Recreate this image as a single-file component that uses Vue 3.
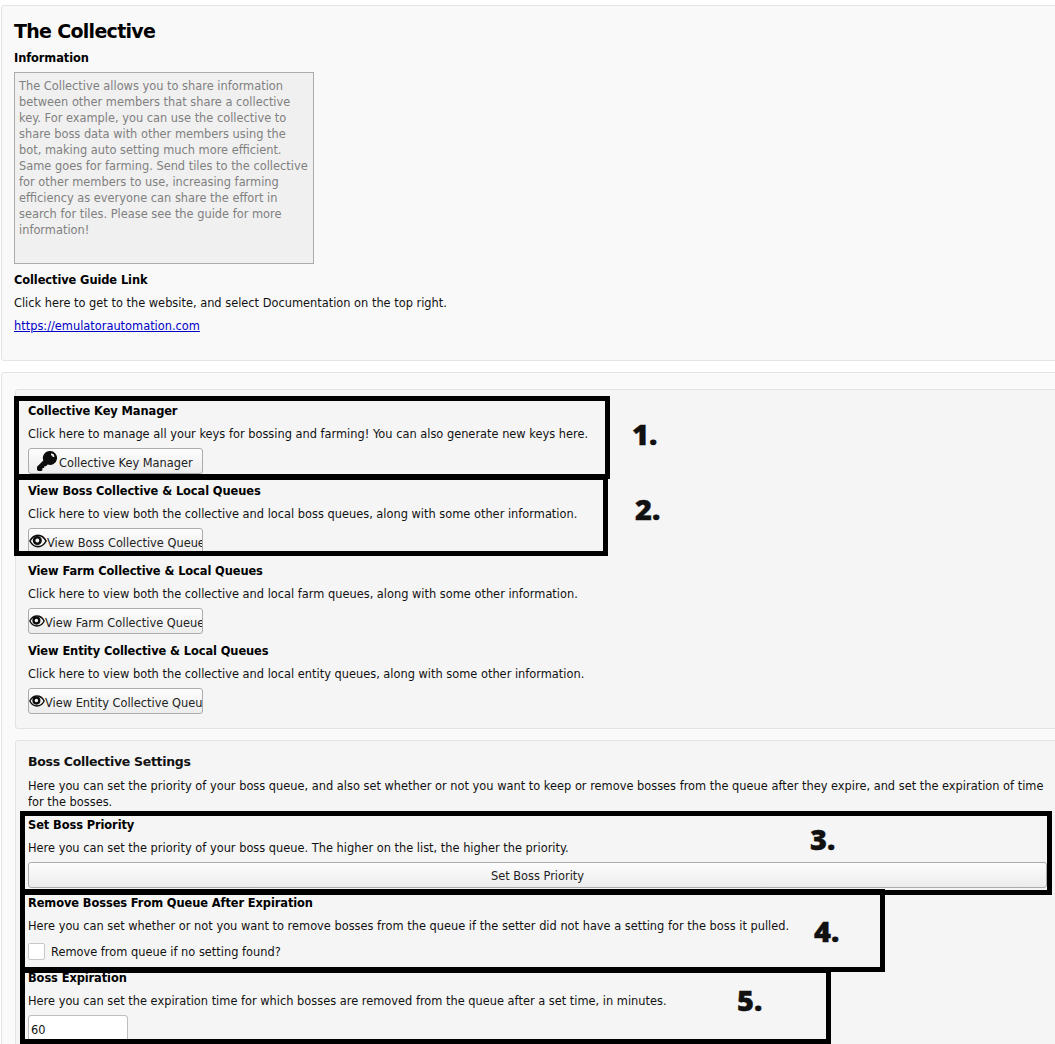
<script setup>
const eyeSections = [
  { title: 'View Boss Collective & Local Queues', text: 'Click here to view both the collective and local boss queues, along with some other information.', btn: 'View Boss Collective Queue', big: true },
  { title: 'View Farm Collective & Local Queues', text: 'Click here to view both the collective and local farm queues, along with some other information.', btn: 'View Farm Collective Queue', big: false },
  { title: 'View Entity Collective & Local Queues', text: 'Click here to view both the collective and local entity queues, along with some other information.', btn: 'View Entity Collective Queue', big: false },
]
</script>

<template>
  <div class="page">
    <section class="card top">
      <h1>The Collective</h1>
      <h3 class="info">Information</h3>
      <div class="area">The Collective allows you to share information between other members that share a collective key. For example, you can use the collective to share boss data with other members using the bot, making auto setting much more efficient. Same goes for farming. Send tiles to the collective for other members to use, increasing farming efficiency as everyone can share the effort in search for tiles. Please see the guide for more information!</div>
      <h3 class="guide">Collective Guide Link</h3>
      <p>Click here to get to the website, and select Documentation on the top right.</p>
      <a href="#" class="link">https://emulatorautomation.com</a>
    </section>

    <section class="card outer">
      <div class="inner first">
        <div class="row">
          <h3>Collective Key Manager</h3>
          <p>Click here to manage all your keys for bossing and farming! You can also generate new keys here.</p>
          <button class="btn keybtn">
            <svg class="icon" viewBox="0 0 20 20" width="20" height="20"><path d="M13 0a7 7 0 1 1-2.300 13.600L9 15.300H7.200v1.800H5.400V19l-1 1H1.200L0 18.800v-3L6.300 9.500A7 7 0 0 1 13 0z" fill="#0c0c0c"/><path d="M14 2.500a3.400 3.400 0 0 1 3.400 3.400h-1.700A1.700 1.700 0 0 0 14 4.200z" fill="#f3f3f3"/></svg>
            <span class="label">Collective Key Manager</span>
          </button>
        </div>
        <div class="row" v-for="s in eyeSections" :key="s.title">
          <h3>{{ s.title }}</h3>
          <p>{{ s.text }}</p>
          <button class="btn eyebtn">
            <svg class="icon" viewBox="0 0 16 16" :width="s.big ? 18 : 16" :height="s.big ? 18 : 16"><path d="M.8 8C2.600 4.600 5 3 8 3s5.400 1.600 7.200 5c-1.800 3.400-4.200 5-7.200 5S2.600 11.400.8 8z" fill="none" stroke="#0c0c0c" stroke-width="1.400"/><circle cx="7.400" cy="7.600" r="2.900" fill="none" stroke="#0c0c0c" stroke-width="2.300"/></svg>
            <span class="label">{{ s.btn }}</span>
          </button>
        </div>
      </div>

      <div class="inner second">
        <h2>Boss Collective Settings</h2>
        <p class="intro">Here you can set the priority of your boss queue, and also set whether or not you want to keep or remove bosses from the queue after they expire, and set the expiration of time for the bosses.</p>
        <div class="row priority">
          <h3>Set Boss Priority</h3>
          <p>Here you can set the priority of your boss queue. The higher on the list, the higher the priority.</p>
          <button class="btn wide"><span class="label">Set Boss Priority</span></button>
        </div>
        <div class="row remove">
          <h3>Remove Bosses From Queue After Expiration</h3>
          <p>Here you can set whether or not you want to remove bosses from the queue if the setter did not have a setting for the boss it pulled.</p>
          <label class="check"><span class="box"></span>Remove from queue if no setting found?</label>
        </div>
        <div class="row expire">
          <h3>Boss Expiration</h3>
          <p>Here you can set the expiration time for which bosses are removed from the queue after a set time, in minutes.</p>
          <div class="input">60</div>
        </div>
      </div>
    </section>

    <div class="mark m1"></div><div class="mark m2"></div><div class="mark m3"></div><div class="mark m4"></div><div class="mark m5"></div>
    <span class="num n1">1.</span><span class="num n2">2.</span><span class="num n3">3.</span><span class="num n4">4.</span><span class="num n5">5.</span>
  </div>
</template>

<style scoped>
.page { position: relative; width: 1055px; height: 1044px; overflow: hidden; background: #fff; font: 11.400px/16px "DejaVu Sans", sans-serif; color: #111; padding-top: 5px; box-sizing: border-box; }
.card { width: 1070px; margin-left: 1px; border: 1px solid #e3e3e3; border-radius: 3px; background: #f9f9f9; box-sizing: border-box; }
.top { height: 356px; padding: 11px 13px 0 12px; }
.top p { margin: 7px 0; }
h1 { margin: 0; font-size: 19px; line-height: 28px; font-weight: 700; color: #000; letter-spacing: -0.7px; }
h2 { margin: 0; font-size: 12.500px; line-height: 16px; font-weight: 700; letter-spacing: -0.3px; }
h3 { margin: 0; font-size: 11.450px; line-height: 16px; font-weight: 700; color: #000; letter-spacing: -0.1px; }
p { margin: 7px 0 6px; line-height: 16px; }
.info { margin-top: 5px; }
.area { width: 300px; height: 192px; margin-top: 6px; padding: 5px 3px 5px 4px; box-sizing: border-box; border: 1px solid #acacac; background: #f0f0f0; color: #808080; }
.guide { margin-top: 8px; }
.link { color: #0000c8; text-decoration: underline; }
.outer { margin-top: 11px; padding: 16px 0 0 13px; height: 700px; background: #fafafa; }
.inner { border: 1px solid #e3e3e3; border-radius: 3px; background: #f5f5f5; padding: 13px 12px 5px; width: 1045px; box-sizing: border-box; }
.second { margin-top: 11px; height: 320px; }
.row { margin-bottom: 9px; }
.intro { margin: 8px 0 7px; width: 1024px; }
.btn { display: flex; align-items: center; width: 175px; height: 26px; padding: 0; border: 1px solid #acacac; border-radius: 3px; background: linear-gradient(#fdfdfd, #ececec); font: inherit; color: #222; overflow: hidden; white-space: nowrap; }
.keybtn { padding-left: 8px; gap: 2px; }
.icon { flex: none; }
.label { padding-top: 4px; }
.wide { width: 1019px; justify-content: center; }
.wide .label { padding-top: 1px; }
.priority { margin-bottom: 7px; }
.remove { margin-bottom: 10px; }
.check { display: flex; align-items: center; gap: 6px; height: 17px; margin-top: 9px; }
.box { width: 17px; height: 17px; border: 1px solid #c8c8c8; border-radius: 2px; background: #fff; box-sizing: border-box; }
.input { width: 100px; height: 30px; box-sizing: border-box; border: 1px solid #bdbdbd; border-radius: 3px; background: #fff; padding: 6px 2px; }
.mark { position: absolute; border: 5px solid #000; box-sizing: border-box; }
.m1 { left: 14px; top: 396px; width: 596px; height: 83px; }
.m2 { left: 14px; top: 475px; width: 594px; height: 81px; }
.m3 { left: 20px; top: 811px; width: 1032px; height: 84px; }
.m4 { left: 20px; top: 889px; width: 865px; height: 83px; }
.m5 { left: 20px; top: 968px; width: 811px; height: 76px; }
.num { position: absolute; font: 800 29px/32px "Open Sans", sans-serif; color: #111; -webkit-text-stroke: .4px #111; }
.n1 { left: 632px; top: 418px; }
.n2 { left: 635px; top: 493px; }
.n3 { left: 810px; top: 823px; }
.n4 { left: 814px; top: 915px; }
.n5 { left: 737px; top: 984px; }
</style>
